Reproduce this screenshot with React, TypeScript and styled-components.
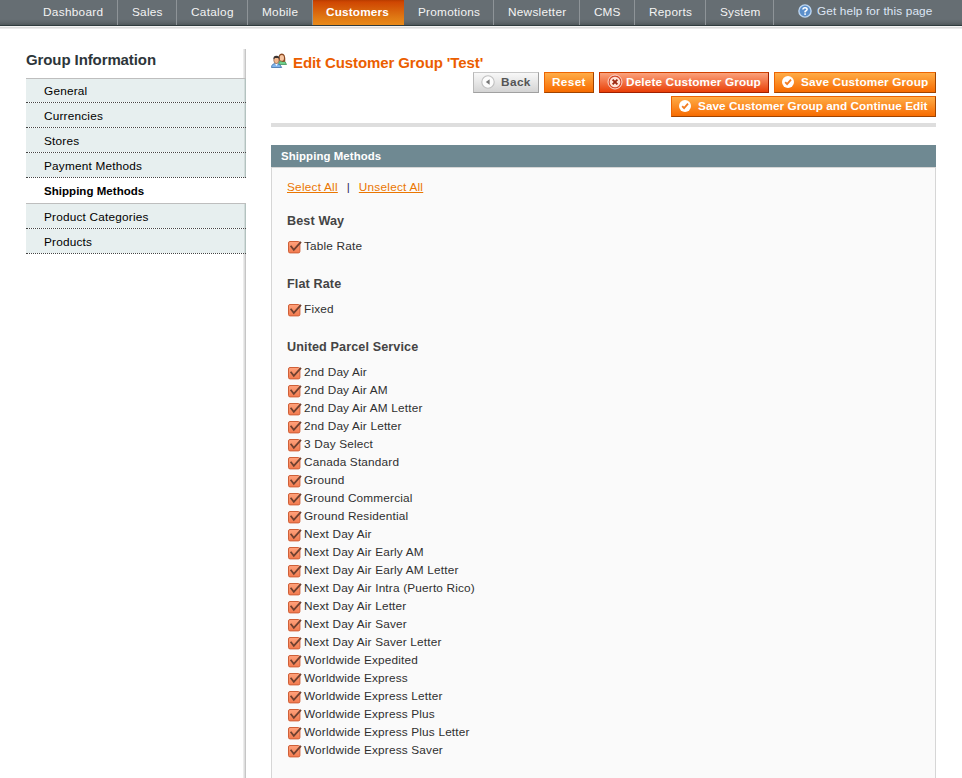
import React from "react";
import styled, { createGlobalStyle, css } from "styled-components";

const GlobalStyle = createGlobalStyle`
  * { box-sizing: border-box; }
  html, body { margin: 0; padding: 0; background: #fff; overflow: hidden; }
  body { font-family: "Liberation Sans", Arial, sans-serif; font-size: 11.8px; color: #2f2f2f; }
  ul { list-style: none; margin: 0; padding: 0; }
  h2, h3, h4 { margin: 0; }
`;

const Page = styled.div`
  width: 962px;
  height: 778px;
  overflow: hidden;
  display: flex;
  flex-direction: column;
`;

const NavBar = styled.nav`
  flex: none;
  display: flex;
  height: 29px;
  padding-left: 29px;
  background: linear-gradient(
    #666e73 0, #666e73 19px, #5f676b 22px, #50585b 25px,
    #2f3b3d 25px, #2f3b3d 26px, #f4f4f4 26px, #f4f4f4 27px,
    #dcdcdc 27px, #dcdcdc 28px, #ebebeb 28px
  );
`;

const NavItem = styled.a<{ $w: number; $ls: number; $active?: boolean }>`
  flex: none;
  width: ${(p) => p.$w}px;
  height: 25px;
  padding-left: 14px;
  line-height: 24px;
  white-space: nowrap;
  letter-spacing: ${(p) => p.$ls}px;
  color: #f4f4f4;
  border-right: 1px solid #8e9498;
  ${(p) =>
    p.$active &&
    css`
      padding-left: 13px;
      border-right: 0;
      font-weight: bold;
      color: #fff;
      background: linear-gradient(#b83c00 0, #cf4602 2px, #e07a14 18px, #e98a1a 25px);
    `}
`;

const HelpLink = styled.a`
  display: flex;
  align-items: flex-start;
  gap: 5px;
  padding: 4px 0 0 24px;
  line-height: 15px;
  letter-spacing: 0.12px;
  white-space: nowrap;
  color: #dde6f5;
`;

const Columns = styled.div`
  flex: 1;
  display: flex;
  align-items: stretch;
  padding: 20px 26px 0;
`;

const Sidebar = styled.aside`
  flex: none;
  width: 220px;
  background: linear-gradient(90deg, #ececec 0 1px, #dedede 1px 2px, #c6c6c6 2px 3px) right / 3px 100% no-repeat;
`;

const SideTitle = styled.h3`
  height: 29px;
  line-height: 22px;
  font-size: 15px;
  letter-spacing: -0.1px;
  color: #2d3539;
`;

const Tabs = styled.ul`
  border-top: 1px solid #bebebe;
`;

const Tab = styled.li<{ $active?: boolean; $first?: boolean }>`
  height: ${(p) => (p.$active ? 26 : p.$first ? 24 : 25)}px;
  padding: ${(p) => (p.$active || p.$first ? 0 : 1)}px 0 0 18px;
  line-height: ${(p) => (p.$active ? 26 : 24)}px;
  letter-spacing: 0.2px;
  color: #000;
  background: linear-gradient(90deg, #e7efef 0 218px, #d2dcdb 218px 219px, #b3c2bf 219px);
  background-clip: padding-box;
  border-bottom: 1px dotted #444;
  ${(p) =>
    p.$active &&
    css`
      font-weight: bold;
      font-size: 11.5px;
      letter-spacing: 0.04px;
      background: #fff;
      border-bottom: 1px solid #bebebe;
    `}
`;

const Main = styled.main`
  width: 665px;
  margin-left: 25px;
  display: flex;
  flex-direction: column;
`;

const Header = styled.header`
  flex: none;
  height: 78px;
  border-bottom: 4px solid #dedede;
`;

const Title = styled.h2`
  display: flex;
  gap: 6px;
  height: 23px;
  padding-top: 4px;
  font-size: 15px;
  line-height: 20px;
  letter-spacing: -0.1px;
  color: #eb5e00;
`;

const Actions = styled.div`
  display: flex;
  flex-wrap: wrap;
  justify-content: flex-end;
  gap: 3px 5px;
`;

const tones = {
  grey: css`
    color: #555;
    border-color: #c8c8c8 #a0a0a0 #a0a0a0 #b8b8b8;
    background: linear-gradient(#f8f8f8, #d4d4d4);
  `,
  orange: css`
    color: #fff;
    border-color: #ed6502 #a04300 #a04300 #ed6502;
    background: linear-gradient(#ffac47, #f76b00);
  `,
  red: css`
    color: #fff;
    border-color: #d04000 #a02000 #a02000 #c83000;
    background: linear-gradient(#fba27c, #e93f07);
  `,
};

const Button = styled.button<{ $tone: keyof typeof tones; $w: number; $gap?: number; $ls?: number }>`
  display: flex;
  align-items: center;
  gap: ${(p) => p.$gap ?? 0}px;
  width: ${(p) => p.$w}px;
  height: 21px;
  padding: 0 0 0 7px;
  border: 1px solid;
  font: bold 11.8px/19px "Liberation Sans", Arial, sans-serif;
  letter-spacing: ${(p) => p.$ls ?? 0.15}px;
  white-space: nowrap;
  svg { flex: none; margin-bottom: 2px; }
  ${(p) => tones[p.$tone]}
`;

const PanelHead = styled.h4`
  flex: none;
  height: 22px;
  margin-top: 18px;
  padding-left: 10px;
  line-height: 22px;
  font-size: 11.4px;
  letter-spacing: 0.1px;
  color: #fff;
  background: #6f8992;
`;

const PanelBody = styled.section`
  flex: 1;
  padding: 11px 15px 0;
  border: 1px solid #d6d6d6;
  border-bottom: 0;
  background: #fafafa;
`;

const Links = styled.div`
  display: flex;
  height: 18px;
  line-height: 17px;
  letter-spacing: 0.23px;
  a { color: #ea7601; text-decoration: underline; }
  span { width: 21px; text-align: center; color: #2f2f5f; }
`;

const Group = styled.div`
  height: 63px;
  padding-top: 16px;
`;

const GroupTitle = styled.h4`
  height: 16px;
  margin-bottom: 8px;
  line-height: 16px;
  font-size: 12.6px;
  letter-spacing: 0.12px;
  color: #444;
`;

const Method = styled.label`
  display: flex;
  height: 18px;
  line-height: 18px;
  letter-spacing: 0.18px;
  white-space: nowrap;
  svg { flex: none; margin: 3px 2px 0 0; }
`;

const CheckIcon = () => (
  <svg width="15" height="14" viewBox="0 0 15 14">
    <defs>
      <linearGradient id="box" x1="0" y1="0" x2="0" y2="1">
        <stop offset="0" stopColor="#ffa27c" />
        <stop offset="1" stopColor="#f27a4e" />
      </linearGradient>
    </defs>
    <rect x="1.5" y="1.5" width="11.4" height="11.4" rx="1.5" fill="url(#box)" stroke="#cf6038" />
    <path d="M3.6 5.8l3.2 4L14 1.8" fill="none" stroke="#70402f" strokeWidth="1.8" />
  </svg>
);

const HelpIcon = () => (
  <svg width="14" height="14" viewBox="0 0 14 14">
    <circle cx="7" cy="7" r="6.1" fill="#5b8fcb" stroke="#bcd6f2" strokeWidth="1.4" />
    <path d="M4.9 5.5Q5 3.7 7 3.7T9.1 5.4Q9.1 6.3 7.1 7.5V8.4" fill="none" stroke="#fff" strokeWidth="1.5" />
    <rect x="6.3" y="9.3" width="1.6" height="1.6" fill="#fff" />
  </svg>
);

const UsersIcon = () => (
  <svg width="16" height="16" viewBox="0 0 16 16">
    <path d="M7.5 11.5Q7.5 7.5 11 7.5T15.5 11.5Z" fill="#6fcf8b" stroke="#41935a" strokeWidth=".8" />
    <path d="M7.6 7.5Q6.8 .4 10.8 .4T14.3 8.5L12 9Z" fill="#8b4b23" />
    <ellipse cx="10.8" cy="4.9" rx="2.2" ry="2.9" fill="#f7c5a0" />
    <path d="M.5 14.5Q.5 10.5 5 10.5T10.7 14.5Z" fill="#82b7ee" stroke="#3e6fa8" strokeWidth=".8" />
    <path d="M4 10.5L5.5 13L7 10.5Z" fill="#fff" />
    <ellipse cx="5.4" cy="7.2" rx="2.6" ry="3.3" fill="#f4b88e" stroke="#754c35" strokeWidth=".6" />
    <path d="M2.5 6.6Q1.8 2.8 5.4 2.7T8.4 6.6L7.4 5.1H4Z" fill="#3b3230" />
  </svg>
);

const BackIcon = () => (
  <svg width="14" height="14" viewBox="0 0 14 14">
    <circle cx="7" cy="7" r="6.2" fill="#fcfcfc" stroke="#c0c0c0" strokeWidth="1.1" />
    <path d="M8.6 4.3v5.4L4.8 7Z" fill="#777" />
  </svg>
);

const DeleteIcon = () => (
  <svg width="16" height="16" viewBox="0 0 16 16">
    <circle cx="8" cy="8" r="7" fill="#d24a2c" stroke="#ffe9e0" strokeWidth=".9" />
    <circle cx="8" cy="8" r="5.3" fill="#ffe3d8" />
    <path d="M5.6 5.6l4.8 4.8M10.4 5.6l-4.8 4.8" stroke="#9c2812" strokeWidth="1.9" />
  </svg>
);

const SaveIcon = () => (
  <svg width="12" height="12" viewBox="0 0 12 12">
    <circle cx="6" cy="6" r="6" fill="#fff" />
    <path d="M3.2 6.2l1.9 2 3.9-4.5" fill="none" stroke="#f27c22" strokeWidth="1.8" />
  </svg>
);

const navItems: [string, number, number][] = [
  ["Dashboard", 89, 0.3],
  ["Sales", 59, 0.25],
  ["Catalog", 71, 0.3],
  ["Mobile", 65, 0.25],
  ["Customers", 91, 0.15],
  ["Promotions", 90, 0.25],
  ["Newsletter", 86, 0.27],
  ["CMS", 55, 0.1],
  ["Reports", 71, 0.25],
  ["System", 68, 0.22],
];

const tabs = [
  "General",
  "Currencies",
  "Stores",
  "Payment Methods",
  "Shipping Methods",
  "Product Categories",
  "Products",
];

const groups = [
  { title: "Best Way", methods: ["Table Rate"] },
  { title: "Flat Rate", methods: ["Fixed"] },
  {
    title: "United Parcel Service",
    methods: [
      "2nd Day Air",
      "2nd Day Air AM",
      "2nd Day Air AM Letter",
      "2nd Day Air Letter",
      "3 Day Select",
      "Canada Standard",
      "Ground",
      "Ground Commercial",
      "Ground Residential",
      "Next Day Air",
      "Next Day Air Early AM",
      "Next Day Air Early AM Letter",
      "Next Day Air Intra (Puerto Rico)",
      "Next Day Air Letter",
      "Next Day Air Saver",
      "Next Day Air Saver Letter",
      "Worldwide Expedited",
      "Worldwide Express",
      "Worldwide Express Letter",
      "Worldwide Express Plus",
      "Worldwide Express Plus Letter",
      "Worldwide Express Saver",
    ],
  },
];

export default function App() {
  return (
    <Page>
      <GlobalStyle />
      <NavBar>
        {navItems.map(([name, w, ls]) => (
          <NavItem key={name} $w={w} $ls={ls} $active={name === "Customers"}>{name}</NavItem>
        ))}
        <HelpLink><HelpIcon />Get help for this page</HelpLink>
      </NavBar>
      <Columns>
        <Sidebar>
          <SideTitle>Group Information</SideTitle>
          <Tabs>
            {tabs.map((name, i) => (
              <Tab key={name} $first={i === 0} $active={name === "Shipping Methods"}>{name}</Tab>
            ))}
          </Tabs>
        </Sidebar>
        <Main>
          <Header>
            <Title><UsersIcon />Edit Customer Group 'Test'</Title>
            <Actions>
              <Button $tone="grey" $w={66} $gap={6} $ls={0.4}><BackIcon />Back</Button>
              <Button $tone="orange" $w={50} $ls={0.35}>Reset</Button>
              <Button $tone="red" $w={170} $gap={3} $ls={0.12}><DeleteIcon />Delete Customer Group</Button>
              <Button $tone="orange" $w={162} $gap={7}><SaveIcon />Save Customer Group</Button>
              <Button $tone="orange" $w={265} $gap={7} $ls={0.02}><SaveIcon />Save Customer Group and Continue Edit</Button>
            </Actions>
          </Header>
          <PanelHead>Shipping Methods</PanelHead>
          <PanelBody>
            <Links><a>Select All</a><span>|</span><a>Unselect All</a></Links>
            {groups.map((g) => (
              <Group key={g.title}>
                <GroupTitle>{g.title}</GroupTitle>
                {g.methods.map((m) => (
                  <Method key={m}><CheckIcon />{m}</Method>
                ))}
              </Group>
            ))}
          </PanelBody>
        </Main>
      </Columns>
    </Page>
  );
}
